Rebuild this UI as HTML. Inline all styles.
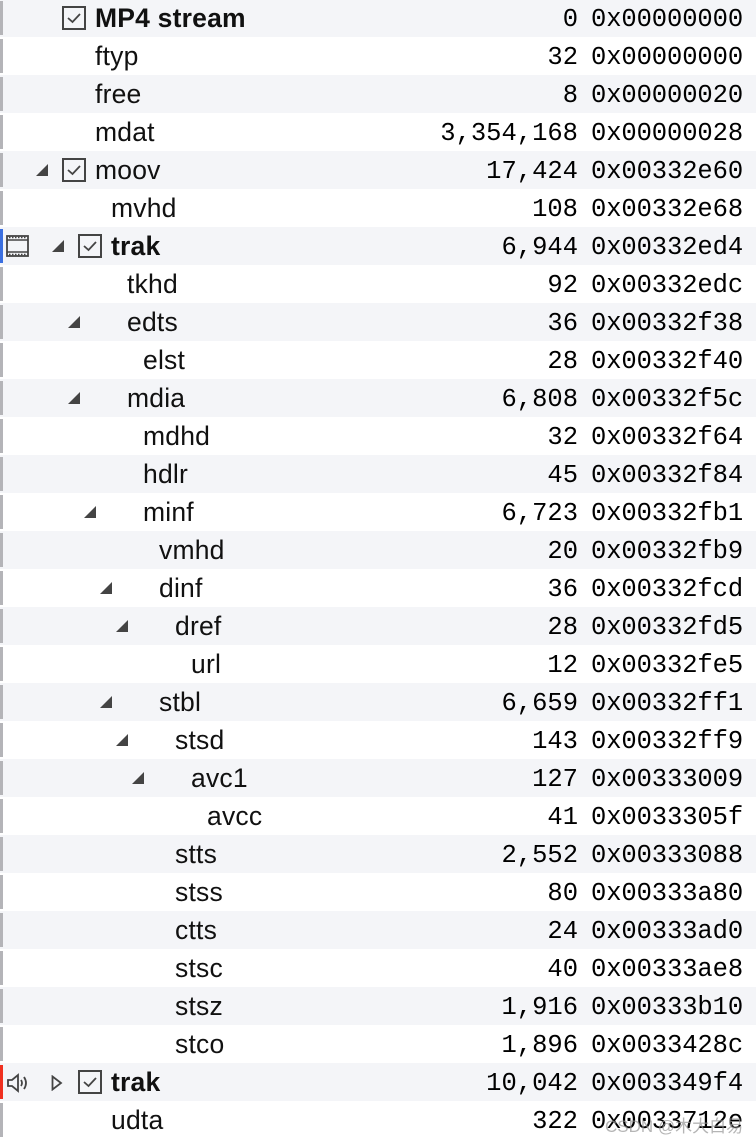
<!DOCTYPE html><html><head><style>
body{margin:0;width:756px;height:1144px;overflow:hidden;background:#fff;font-family:"Liberation Sans",sans-serif;}
.r{position:absolute;left:0;width:756px;height:38px;}
.g{background:#f4f5f8;}
.bar{position:absolute;left:0;top:2px;width:3px;height:34px;background:#b4b4b8;}
.n{position:absolute;top:4px;font-size:26.5px;color:#111;letter-spacing:0.2px;}
.b{font-weight:bold;}
.s{position:absolute;right:178px;top:6px;font-family:"Liberation Mono",monospace;font-size:25.5px;color:#000;}
.o{position:absolute;left:591px;top:6px;font-family:"Liberation Mono",monospace;font-size:25.5px;color:#000;letter-spacing:-0.1px;}
.cb{position:absolute;top:7px;width:20px;height:20px;border:2px solid #444;}
.tri{position:absolute;top:13px;width:0;height:0;border-left:12px solid transparent;border-bottom:12px solid #444;}
</style></head><body>
<div id="c"></div>
<script>
var rows=[
["MP4 stream",0,"0","0x00000000","b","cb"],
["ftyp",0,"32","0x00000000"],
["free",0,"8","0x00000020"],
["mdat",0,"3,354,168","0x00000028"],
["moov",0,"17,424","0x00332e60","","cb","t"],
["mvhd",1,"108","0x00332e68"],
["trak",1,"6,944","0x00332ed4","b","cb","t","film"],
["tkhd",2,"92","0x00332edc"],
["edts",2,"36","0x00332f38","","","t"],
["elst",3,"28","0x00332f40"],
["mdia",2,"6,808","0x00332f5c","","","t"],
["mdhd",3,"32","0x00332f64"],
["hdlr",3,"45","0x00332f84"],
["minf",3,"6,723","0x00332fb1","","","t"],
["vmhd",4,"20","0x00332fb9"],
["dinf",4,"36","0x00332fcd","","","t"],
["dref",5,"28","0x00332fd5","","","t"],
["url",6,"12","0x00332fe5"],
["stbl",4,"6,659","0x00332ff1","","","t"],
["stsd",5,"143","0x00332ff9","","","t"],
["avc1",6,"127","0x00333009","","","t"],
["avcc",7,"41","0x0033305f"],
["stts",5,"2,552","0x00333088"],
["stss",5,"80","0x00333a80"],
["ctts",5,"24","0x00333ad0"],
["stsc",5,"40","0x00333ae8"],
["stsz",5,"1,916","0x00333b10"],
["stco",5,"1,896","0x0033428c"],
["trak",1,"10,042","0x003349f4","b","cb","c","aud"],
["udta",1,"322","0x0033712e"]];
var h="";
rows.forEach(function(r,i){
 var x=95+16*r[1]; if(i==0)x=95;
 h+='<div class="r'+(i%2==0?' g':'')+'" style="top:'+(38*i-1)+'px">';
 var bc=r[7]=="film"?"#3b6fe0":r[7]=="aud"?"#f03020":"#b4b4b8";
 h+='<div class="bar" style="background:'+bc+'"></div>';
 if(r[7]=="film")h+='<svg style="position:absolute;left:6px;top:7px" width="23" height="24" viewBox="0 0 23 24"><rect x="1" y="2" width="21" height="20" fill="none" stroke="#444" stroke-width="1.8"/><line x1="1" y1="6" x2="22" y2="6" stroke="#444" stroke-width="1.4"/><line x1="1" y1="18" x2="22" y2="18" stroke="#444" stroke-width="1.4"/><path d="M3 3.5h17M3 20.5h17" stroke="#444" stroke-width="1.5" stroke-dasharray="1.5 1.5"/></svg>';
 if(r[7]=="aud")h+='<svg style="position:absolute;left:6px;top:9px" width="26" height="22" viewBox="0 0 26 22"><path d="M2 8h4l6-5v16l-6-5H2z" fill="none" stroke="#444" stroke-width="1.8"/><path d="M15 8q2 3 0 6M18 5q4 6 0 12" fill="none" stroke="#444" stroke-width="1.8"/></svg>';
 if(r[6]=="t")h+='<div class="tri" style="left:'+(x-59)+'px"></div>';
 if(r[6]=="c")h+='<svg style="position:absolute;left:'+(x-60)+'px;top:12px" width="12" height="16"><path d="M1.5 1.5L10 8L1.5 14.5z" fill="none" stroke="#444" stroke-width="1.8"/></svg>';
 if(r[5]=="cb")h+='<div class="cb" style="left:'+(x-33)+'px"><svg width="20" height="20" style="position:absolute;left:0;top:0"><path d="M4 10l4.5 4L16 6" fill="none" stroke="#444" stroke-width="1.8"/></svg></div>';
 h+='<div class="n'+(r[4]=="b"?' b':'')+'" style="left:'+x+'px">'+r[0]+'</div>';
 h+='<div class="s">'+r[2]+'</div><div class="o">'+r[3]+'</div></div>';
});
document.getElementById("c").innerHTML=h;
</script>
<div style="position:absolute;left:605px;top:1112px;font-size:17px;color:rgba(150,150,150,0.7);font-family:'Liberation Sans','Noto Sans CJK SC',sans-serif">CSDN @木大白易</div>
</body></html>
